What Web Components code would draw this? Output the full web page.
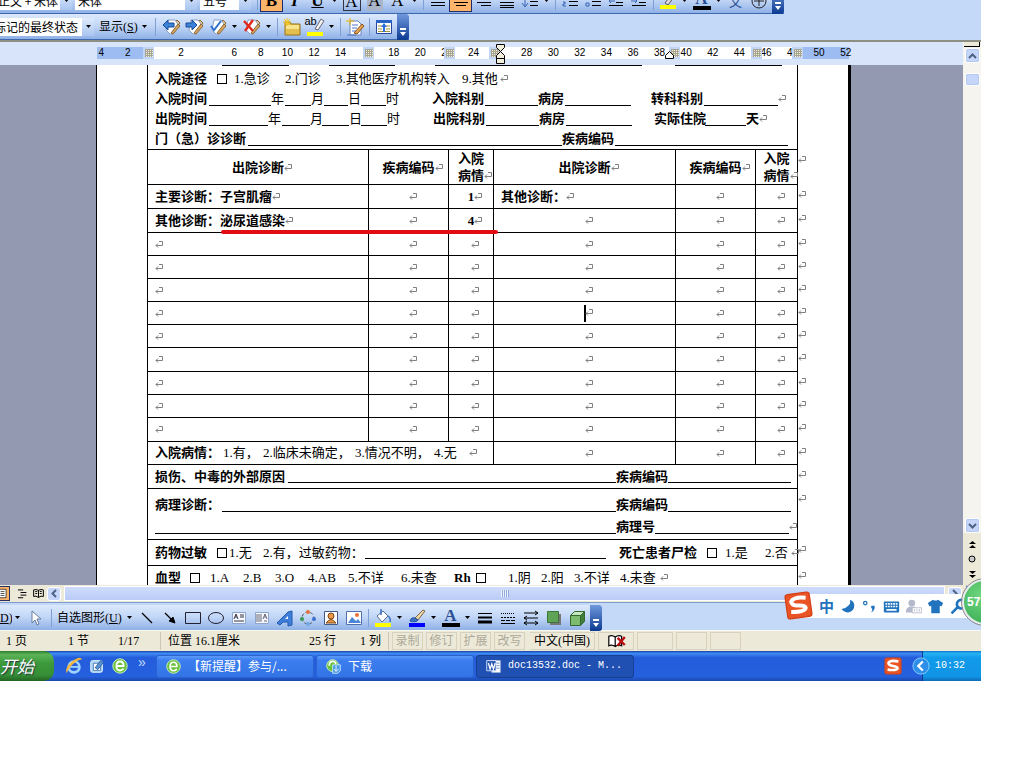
<!DOCTYPE html>
<html lang="zh-CN">
<head>
<meta charset="utf-8">
<title>doc13532.doc - Microsoft Word</title>
<style>
body{margin:0;background:#fff;font:12px/16px "Liberation Serif","Noto Sans CJK SC",serif;color:#000}
</style>
</head>
<body>
<xp-desktop></xp-desktop>
<script>
const define=(name,css,html)=>customElements.define(name,class extends HTMLElement{
  connectedCallback(){
    if(this.shadowRoot)return;
    const t=document.createElement('template');
    t.innerHTML='<style>*{box-sizing:border-box}'+css+'</style>'+(typeof html==='function'?html(this):html);
    this.attachShadow({mode:'open'}).append(t.content.cloneNode(true));
  }
});
const svg=(body,box='0 0 20 20')=>`<svg viewBox="${box}" fill="none" stroke="#000" stroke-width="1">${body}</svg>`;
const doc='<path d="M6 13 15 3l3 3-8 11z" fill="#e9c48a" stroke="#8a6a3c"/><path d="M6 3h7l3 4-5 10H8L4 13z" fill="#fff" stroke="#8aa0c8"/><path d="m9 16 7-9 2 2-7 8z" fill="#d9a45c" stroke="#8a6a3c"/>';
const lines=(a)=>a.map(([x,y,w])=>`<path d="M${x} ${y}.5h${w}"/>`).join('');
const ICONS={
  b:'<b>B</b>', i:'<i>I</i>', u:'<u>U</u>',
  abox:'<span class="box">A</span>', ashade:'<span class="shade">A</span>', a:'<span class="wide">A</span>',
  left:svg(lines([[3,5,14],[3,8,14],[3,11,14],[3,14,14]])), center:svg(lines([[3,5,14],[5,8,10],[3,11,14],[5,14,10]])),
  right:svg(lines([[3,5,14],[7,8,10],[3,11,14],[7,14,10]])), dist:svg(lines([[3,5,14],[3,8,14],[3,11,14],[3,14,14],[3,16,14]])),
  spacing:svg('<path d="M5 4v11M2 12l3 4 3-4" stroke="#3565b5"/>'+lines([[10,6,8],[10,10,8],[10,14,8]])),
  num:svg('<path d="M4 4v4M3 11h2v2H3v2h3" stroke="#3565b5"/>'+lines([[9,6,9],[9,10,9],[9,14,9]])),
  bul:svg('<path d="M3 5h3v3H3zM3 12h3v3H3z" stroke="#3565b5"/>'+lines([[9,6,9],[9,10,9],[9,14,9]])),
  out:svg(lines([[3,5,14],[10,8,7],[10,11,7],[3,14,14]])+'<path d="M3 10h6M5 8l-2 2 2 2" stroke="#3565b5"/>'),
  ind:svg(lines([[3,5,14],[10,8,7],[10,11,7],[3,14,14]])+'<path d="M2 10h6M6 8l2 2-2 2" stroke="#3565b5"/>'),
  high:svg('<path d="m7 12 6-8 3 2-6 8z" fill="#ddd" stroke="#555"/><path d="M2 14h16v4H2z" fill="#ff0" stroke="none"/>'),
  fcol:'<span class="fc">A</span>',
  wen:'<span class="wen">文</span>', circ:svg('<circle cx="10" cy="10" r="7" stroke="#222"/><path d="M5 10h10M10 5v10" stroke="#222"/>'),
  prev:svg(doc+'<path d="M1 8l5-5v3h6v4H6v3z" fill="#3b82d8" stroke="#174a9a"/>'),
  next:svg(doc+'<path d="M12 8 7 3v3H1v4h6v3z" fill="#3b82d8" stroke="#174a9a"/>'),
  accept:svg(doc+'<path d="m3 9 3 4 7-9" stroke="#2f72cf" stroke-width="2"/>'),
  reject:svg(doc+'<path d="m2 4 9 10M11 3 3 14" stroke="#e0281c" stroke-width="2.4"/>'),
  note:svg('<path d="M3 5h5l1 2h9v11H3z" fill="#e3c04e" stroke="#96731d"/><path d="M4 8h13v4H4z" fill="#f7e48e" stroke="none"/><path d="M5 1v8M1 5h8M2 2l6 6M8 2 2 8" stroke="#f0c419"/>'),
  abhi:'<span class="ab">ab</span>'+svg('<path d="m10 12 6-10 3 2-6 9z" fill="#eee" stroke="#667"/><path d="M2 15h16v4H2z" fill="#ff0" stroke="none"/>'),
  track:svg('<path d="M5 4h8l3 3v11H5z" fill="#fff" stroke="#6d86bd"/><path d="M7 8h6M7 11h5M7 14h4M2 18h9" stroke="#4a74c9"/><path d="m9 16 8-9 2 2-7 8z" fill="#e6a452" stroke="#85541d"/><path d="M5 1v7M1 4h8" stroke="#f0b400"/>'),
  pane:svg('<path d="M2.500 3.500h15v13h-15z" fill="#fff" stroke="#23479c"/><path d="M2 3h16v3H2z" fill="#2a62c8" stroke="none"/><path d="M4 9h4M12 9h4M4 12h4M12 12h4M4 14.500h12" stroke="#a39037"/><path d="m10 6 3 4h-2v5H9v-5H7z" fill="#2a70d8" stroke="none"/>'),
  cursor:svg('<path d="M7 3v12l3-3 2 5 2-1-2-5h4z" fill="#fff" stroke="#66799c"/>'),
  line:svg('<path d="m5 5 10 10" stroke-width="1.300"/>'),
  arrow:svg('<path d="m5 5 7 7" stroke-width="1.300"/><path d="m15 15-6-2 4-4z" fill="#000"/>'),
  rect:svg('<path d="M2.500 4.500h15v11h-15z" stroke="#223"/>'), oval:svg('<ellipse cx="10" cy="10" rx="7.500" ry="5.500" stroke="#223"/>'),
  tbox:svg('<path d="M3.500 4.500h13v11h-13z" fill="#f6f9ff" stroke="#8ea3cd"/><path d="m5 11 2-5 2 5M6 9h2M11 7h4M11 9h4M5 13h10" stroke="#334"/>'),
  vbox:svg('<path d="M3.500 4.500h13v11h-13z" fill="#f6f9ff" stroke="#8ea3cd"/><path d="m11 11 2-5 2 5M12 9h2M5 6v8M7 6v8M9 6v8M12 13h3" stroke="#667"/>'),
  wart:svg('<path d="m2 15 11-11 4-1v14l-4 1v-4H8l-3 3z" fill="#3f7fdc" stroke="#2458ad"/><path d="M10 11h3V8z" fill="#fff" stroke="none"/>'),
  diag:svg('<circle cx="10" cy="10" r="6" stroke="#555" stroke-dasharray="3 2"/><circle cx="10" cy="4" r="2" fill="#e8703a" stroke="none"/><circle cx="4" cy="11" r="2" fill="#3a9a52" stroke="none"/><circle cx="16" cy="11" r="2" fill="#3a6fd0" stroke="none"/><circle cx="10" cy="16" r="2" fill="#70a8e8" stroke="none"/>'),
  clip:svg('<path d="M3.500 3.500h13v13h-13z" fill="#fff" stroke="#445a86"/><circle cx="10" cy="8" r="3" fill="#e89a46" stroke="#7c4515"/><path d="M5 15q5-7 10 0z" fill="#e89a46" stroke="#7c4515"/>'),
  pic:svg('<path d="M2.500 3.500h15v13h-15z" fill="#fff" stroke="#4f70ad"/><circle cx="13" cy="7" r="2" fill="#e8703a" stroke="none"/><path d="m4 15 4-6 4 4 2-2 3 4z" fill="#4a86d8" stroke="none"/>'),
  fill:svg('<path d="m4 8 6-5 5 5-6 6z" fill="#fff" stroke="#556b96"/><path d="M8 1v6M15 8q3 2 2 6" stroke="#3a70c0" stroke-width="1.500"/><path d="M2 15h16v4H2z" fill="#ff0" stroke="none"/>'),
  brush:svg('<path d="m8 10 8-8 2 1-7 9z" fill="#efd6a8" stroke="#7d6642"/><path d="M3 13q1-4 5-3l3 2q-2 3-8 1z" fill="#3a72c8" stroke="#24509b"/><path d="M2 15h16v4H2z" fill="#00f" stroke="none"/>'),
  wts:svg('<path d="M3 5.500h14" /><path d="M3 9.500h14" stroke-width="2"/><path d="M3 14h14" stroke-width="3"/>'),
  dash:svg('<path d="M3 5.500h14" stroke-dasharray="1 1"/><path d="M3 9.500h14" stroke-dasharray="2 1"/><path d="M3 12.500h14" stroke-dasharray="4 1"/><path d="M3 15.500h14"/>'),
  arrs:svg('<path d="M3 5h14M3 10h14M3 15h14M14 3l3 2-3 2M6 8l-3 2 3 2M6 13l-3 2 3 2M14 13l3 2-3 2"/>'),
  shad:svg('<path d="M6 6h11v11H6z" fill="#777" stroke="none"/><path d="M3.500 3.500h11v11h-11z" fill="#5fa356" stroke="#3c7537"/>'),
  cube:svg('<path d="M3.500 7.500h10v10h-10z" fill="#7dbb70" stroke="#34682f"/><path d="m3.500 7.500 4-4h10l-4 4z" fill="#c5e5bd" stroke="#34682f"/><path d="m13.500 7.500 4-4v10l-4 4z" fill="#3f7f3a" stroke="#34682f"/>'),
  layout:svg('<path d="M4.500 3.500h11v13h-11z" fill="#fff"/><path d="M7 7h6M7 10h6M7 13h6"/>'),
  outline:svg('<path d="M3 4.500h8M7 8.500h9M7 12.500h9M3 16.500h8" stroke-width="1.500"/>'),
  book:svg('<path d="M10 5Q6 3 2.500 4.500v10Q6 13 10 16q4-3 7.500-1.500v-10Q14 3 10 5v11M5 7h3M5 10h3M12 7h3M12 10h3" stroke-width="1.500"/>'),
  spell:svg('<path d="M11 5Q7 2 3 4v12q4-2 8 1 4-3 8-1V4q-4-2-8 1v12" fill="#fff" stroke-width="1.500"/><path d="m14 6 9 9M23 5l-9 11" stroke="#b80f14" stroke-width="3"/>','0 0 24 20'),
  ie:svg('<circle cx="10" cy="11" r="6" stroke="#9ed4ff" stroke-width="3"/><path d="M5 11h10" stroke="#9ed4ff" stroke-width="2"/><path d="M2 18Q-1 12 8 5t11-2q-3-1-9 4T2 18z" fill="#f4b73c" stroke="none"/>'),
  desk:svg('<rect x="3" y="4" width="13" height="13" rx="2" fill="#a9d3f4" stroke="#e5f4ff"/><path d="M6 7h8v8H6z" fill="#fff" stroke="#4d7db5"/><path d="m8 12 6-8 3 2-6 8z" fill="#5b94d4" stroke="#265b9d"/>'),
  green:svg('<circle cx="10" cy="10" r="8" fill="#69c33d" stroke="#d4f3bd"/><path d="M14 13q-2 2-4 2-4 0-4-5t4-5q4 0 4 5H6" stroke="#fff" stroke-width="2"/>'),
  dl:svg('<circle cx="9" cy="9" r="7" fill="#69c33d" stroke="#d4f3bd"/><path d="M13 7q-1-3-4-3-4 0-4 5" stroke="#fff" stroke-width="2"/><path d="M9 8h9v7l-3 3H9z" fill="#4b9ce8" stroke="#cfe8ff"/><path d="M13 9v6m-2-2 2 3 3-3" stroke="#fff"/>'),
  word:svg('<path d="M8 3h10v14H8z" fill="#fff" stroke="#9fb6e0"/><path d="M13 6h4M13 9h4M13 12h4" stroke="#5c82c8"/><path d="M2 3h11v12H2z" fill="#2c59b4" stroke="#dce8ff"/><path d="m4 6 2 7 2-6 2 6 2-7" stroke="#fff" stroke-width="1.500"/>'),
  sogou:svg('<rect x="1" y="1" width="18" height="18" rx="2" fill="#ea5324" stroke="#d4431a"/><path d="M16 5Q7 3 5 6.500q0 3 5 3.500 5 .5 5 2.500-1 3-11 1.500" stroke="#fff" stroke-width="3"/>'),
  moon:svg('<path d="M13 2q2 8-10 11 3 4 8 4 7-2 7-8 0-5-5-7z" fill="#2273bd" stroke="none"/>'),
  punct:svg('<circle cx="5" cy="6" r="2" stroke="#2273bd" stroke-width="1.500"/><path d="M12 9h4q1 5-4 8 2-3 1-5h-1z" fill="#2273bd" stroke="none"/>'),
  kbd:svg('<rect x="1" y="4" width="18" height="13" rx="1" fill="#2273bd" stroke="none"/><path d="M3 7h14M3 10h14" stroke="#fff" stroke-width="2" stroke-dasharray="2 1"/><path d="M4 14h12" stroke="#fff" stroke-width="2"/>'),
  user:svg('<circle cx="8" cy="6" r="4" fill="#b4b9cc" stroke="none"/><path d="M1 17q0-7 7-7t7 7z" fill="#b4b9cc" stroke="none"/><path d="M8.500 11.500h11v6h-11z" fill="#fff" stroke="#b4b9cc"/><path d="M11 13v3M14 13v3M17 13v3" stroke="#b4b9cc"/>'),
  shirt:svg('<path d="m1 6 6-4q3 2 6 0l6 4-2 4-2-1v9H5V9l-2 1z" fill="#2273bd" stroke="none"/>'),
  wrench:svg('<path d="m3 18 8-8" stroke="#2273bd" stroke-width="3"/><path d="M17 3a5 5 0 1 0 2 6" stroke="#2273bd" stroke-width="3"/>'),
  tray:svg('<circle cx="10" cy="10" r="9" fill="#2e8fe8" stroke="#8fd0ff"/><path d="m12 5-5 5 5 5" stroke="#fff" stroke-width="2.500"/>')
};
define('ui-icon',':host{display:inline-block;width:20px;height:20px;position:relative;text-align:center;font:bold 17px/20px "Liberation Serif",serif}svg{display:block;width:100%;height:100%}.box{display:block;border:1px solid #334;font-weight:400;line-height:17px;margin:1px}.shade{display:block;background:#a9b5c9;font-weight:400;margin:0 2px}.wide{font-weight:400}.fc{display:block;border-bottom:4px solid #000;line-height:15px;color:#2b4f93;margin:0 1px}.wen{display:block;font:13px/20px "Noto Sans CJK SC",sans-serif;color:#2b4f93}.ab{position:absolute;left:0;top:-2px;font:11px/12px "Liberation Sans",sans-serif}',
  h=>ICONS[h.getAttribute('name')]);
const caret='<button class="more" aria-label="更多"><svg width="5" height="3" viewBox="0 0 5 3"><path d="M0 0h5L2.500 3z"/></svg></button>';
define('tool-button',':host{display:flex;flex:none;align-items:center;height:22px}button{border:0;background:none;padding:0;margin:0;font:inherit;color:inherit}.main{width:23px;height:22px;display:grid;place-items:center}.text{white-space:nowrap;overflow:hidden;text-align:left;font-size:12px;line-height:20px}.more{width:11px;height:22px;display:grid;place-items:center}:host([active]) .main{background:#fcb46a;border:1px solid #1c2c6c}',
  h=>(h.hasAttribute('icon')?`<button class="main" aria-label="${h.getAttribute('label')}"><ui-icon name="${h.getAttribute('icon')}"></ui-icon></button>`:`<button class="text" style="width:${h.getAttribute('size')}px"><slot></slot></button>`)+(h.hasAttribute('menu')?caret:''));
define('drop-box',':host{display:flex;flex:none;height:18px;background:#fff;overflow:hidden}select{appearance:none;border:0;background:none;padding:0;margin:0 0 0 var(--start,3px);flex:1;min-width:0;font:12px/18px "Noto Sans CJK SC",sans-serif;color:#000}span{width:12px;background:linear-gradient(#dfeafc,#a9c5f0);display:grid;place-items:center}',
  h=>`<select aria-label="${h.getAttribute('label')}"><option>${h.getAttribute('value')}</option></select><span><svg width="5" height="3" viewBox="0 0 5 3"><path d="M0 0h5L2.500 3z"/></svg></span>`);
define('tool-sep',':host{flex:none;width:6px;height:18px;display:flex;justify-content:center}i{width:1px;background:#7d9fd6}','<i></i>');
define('tool-bar',':host{display:flex;flex:none;width:max-content;height:26px;align-items:center;background:linear-gradient(#dce9fc,#c0d5f6 50%,#8fb1e6);border-bottom:1px solid #3f67b0}.end{width:12px;height:26px;margin-left:2px;background:linear-gradient(#6f98dc,#0b3a92);border-radius:0 3px 3px 0;display:grid;align-items:end;justify-items:center;border:0;padding:0 0 4px}',
  '<slot></slot><button class="end" aria-label="工具栏选项"><svg width="6" height="8" viewBox="0 0 6 8" fill="#fff"><path d="M0 0h6v2H0zM0 4h6L3 8z"/></svg></button>');
const T=(icon,label,menu,active)=>`<tool-button icon="${icon}" label="${label}"${menu?' menu':''}${active?' active':''}></tool-button>`;
const S='<tool-sep></tool-sep>';

define('para-mark',':host{display:inline-block;width:8px;height:8px;margin-right:-8px}svg{display:block}','<svg width="8" height="8" viewBox="0 0 8 8" fill="none" stroke="#808080"><path d="M4 .5h3.500v4H1M3 2.500 1 4.500l2 2"/></svg>');
define('form-line',':host{display:grid;height:20px;line-height:20px;white-space:nowrap;align-items:center}::slotted(s){text-decoration:none;border-bottom:1px solid #000;height:13px}::slotted(input){appearance:none;width:10px;height:10px;margin:0;border:1px solid #000;background:#fff}::slotted(b){font-weight:700}',
  h=>{h.style.gridTemplateColumns=h.getAttribute('cols').split(' ').map(v=>v+'px').join(' ');return '<slot></slot>'});
define('page-ruler',`:host{display:block;position:relative;height:23px}
.band{position:absolute;inset:5px 2px 6px 1px;background:#fff;border-left:56px solid #9dbcf1;border-right:54px solid #9dbcf1}
.nums{position:relative;display:grid;grid-template-columns:repeat(29,1fr);margin:0 -8px;text-align:center;font:10px/22px "Liberation Sans",sans-serif}
.mk{position:absolute;top:5px;width:11px;height:12px;background:#c1d5f6;display:grid;place-items:center}.mk i{width:8px;height:8px;background:repeating-linear-gradient(90deg,#a5a392 0 1px,#fff0 1px 2px),repeating-linear-gradient(#a5a392 0 1px,#f4f0d8 1px 2px)}
svg{position:absolute}`,
  ()=>'<div class="band"></div><div class="nums">'+[4,2,'',2,'',6,8,10,12,14,'',18,20,22,24,'',28,30,32,34,36,38,40,42,44,46,48,50,52].map(n=>`<span>${n}</span>`).join('')+'</div>'+[47,267,348,393,573,655,696].map(x=>`<span class="mk" style="left:${x}px"><i></i></span>`).join('')+
  '<svg style="left:399px;top:2px" width="11" height="21" viewBox="0 0 11 21" fill="#f1eedd" stroke="#000"><path d="M1.500.5h8v3l-4 4-4-4zM5.500 7.500l4 4v3h-8v-3zM1.500 14.500h8v5h-8z"/></svg><svg style="left:569px;top:9px" width="9" height="8" viewBox="0 0 9 8" fill="#fff" stroke="#000"><path d="M4.500.5l4 4v3h-8v-3z"/></svg>');
const P='<para-mark></para-mark>';
const blankRow=(tall,cursor)=>`<tr class="${tall?'t24':'t23'}"><td>${P}</td><td class="c">${P}</td><td class="c">${P}</td><td class="c">${cursor?'<em></em>':''}${P}</td><td class="c">${P}</td><td class="c">${P}</td><td class="end">${P}</td></tr>`;
define('word-page',`:host{display:block;position:relative;background:#fff;border-left:1px solid #000;border-right:3px solid #000;font-size:13px;padding-left:50px}
table{border-collapse:collapse;table-layout:fixed;width:666px;margin-top:-1px}
td,th{border:1px solid #000;padding:0 0 0 7px;font-size:13px;line-height:17px;white-space:nowrap;text-align:left;font-weight:400}
th,.c{text-align:center;padding:0;font-weight:700}th{font-weight:700}
.end{border:0;vertical-align:top;padding:4px 0 0;line-height:12px}
.t23{height:23px}.t24{height:24px}.head{height:35px}.path{height:51px}.drug{height:26px}.blood{height:40px}.path td,.blood td{vertical-align:top}
.path form-line+form-line{margin-top:2px}.path td{padding-top:6px}.blood td{padding-top:2px}.blood .end,.path .end{padding-top:4px}
.info{height:85px}.info td{vertical-align:top}.top{display:grid;grid-template-columns:67px 67px 40px 66px 40px 207px 33px 107px;height:4px;align-items:start}.top s{height:1px;background:#000}
em{display:inline-block;width:2px;height:17px;margin:0 -1px;background:#000;vertical-align:middle}
.red{position:absolute;left:124px;top:165px;width:277px;height:4px;border-radius:2px;background:#e00d12}`,
`<table><colgroup><col style="width:221px"><col style="width:80px"><col style="width:45px"><col style="width:182px"><col style="width:80px"><col style="width:42px"><col style="width:16px"></colgroup>
<tr class="info"><td colspan="6"><div class="top"><i></i><s></s><i></i><s></s><i></i><s></s><i></i><s></s></div>
<form-line cols="62 17 51 51 126 38 10"><b>入院途径</b><input type="checkbox" aria-label="入院途径"><span>1.急诊</span><span>2.门诊</span><span>3.其他医疗机构转入</span><span>9.其他</span>${P}</form-line>
<form-line cols="54 62 14 26 13 24 13 25 46 53 53 27 66 20 53 74 10"><b>入院时间</b><s></s><span>年</span><s></s><span>月</span><s></s><span>日</span><s></s><span>时</span><b>入院科别</b><s></s><b>病房</b><s></s><i></i><b>转科科别</b><s></s>${P}</form-line>
<form-line cols="54 59 14 28 12 27 12 26 46 53 53 27 66 22 51 41 13 10"><b>出院时间</b><s></s><span>年</span><s></s><span>月</span><s></s><span>日</span><s></s><span>时</span><b>出院科别</b><s></s><b>病房</b><s></s><i></i><b>实际住院</b><s></s><b>天</b>${P}</form-line>
<form-line cols="93 314 53 173"><b>门（急）诊诊断</b><s></s><b>疾病编码</b><s></s></form-line></td><td class="end"></td></tr>
<tr class="head"><th>出院诊断${P}</th><th>疾病编码${P}</th><th>入院<br>病情${P}</th><th>出院诊断${P}</th><th>疾病编码${P}</th><th>入院<br>病情${P}</th><td class="end">${P}</td></tr>
<tr class="t24"><td><b>主要诊断：子宫肌瘤</b>${P}</td><td class="c">${P}</td><td class="c">1${P}</td><td><b>其他诊断：</b>${P}</td><td class="c">${P}</td><td class="c">${P}</td><td class="end">${P}</td></tr>
<tr class="t24"><td><b>其他诊断：泌尿道感染</b>${P}</td><td class="c">${P}</td><td class="c">4${P}</td><td class="c">${P}</td><td class="c">${P}</td><td class="c">${P}</td><td class="end">${P}</td></tr>
${[0,0,0,0,0,1,0,0,1].map((t,i)=>blankRow(t,i===3)).join('')}
<tr class="t23"><td colspan="3"><form-line cols="68 40 92 79 35 8"><b>入院病情：</b><span>1.有，</span><span>2.临床未确定，</span><span>3.情况不明，</span><span>4.无</span>${P}</form-line></td><td class="c">${P}</td><td class="c">${P}</td><td class="c">${P}</td><td class="end">${P}</td></tr>
<tr class="t24"><td colspan="6"><form-line cols="133 328 52 123"><b>损伤、中毒的外部原因</b><s></s><b>疾病编码</b><s></s></form-line></td><td class="end">${P}</td></tr>
<tr class="path"><td colspan="6"><form-line cols="67 394 52 123"><b>病理诊断：</b><s></s><b>疾病编码</b><s></s></form-line><form-line cols="461 39 134 8"><s></s><b>病理号</b><s></s>${P}</form-line></td><td class="end">${P}</td></tr>
<tr class="drug"><td colspan="6"><form-line cols="62 12 34 102 241 13 88 18 40 26 8"><b>药物过敏</b><input type="checkbox" aria-label="药物过敏"><span>1.无</span><span>2.有，过敏药物：</span><s></s><i></i><b>死亡患者尸检</b><input type="checkbox" aria-label="死亡患者尸检"><span>1.是</span><span>2.否</span>${P}</form-line></td><td class="end">${P}</td></tr>
<tr class="blood"><td colspan="6"><form-line cols="35 20 33 32 33 40 53 53 22 32 33 33 46 40 8"><b>血型</b><input type="checkbox" aria-label="血型"><span>1.A</span><span>2.B</span><span>3.O</span><span>4.AB</span><span>5.不详</span><span>6.未查</span><b>Rh</b><input type="checkbox" aria-label="Rh"><span>1.阴</span><span>2.阳</span><span>3.不详</span><span>4.未查</span>${P}</form-line></td><td class="end">${P}</td></tr>
</table><div class="red"></div>`);
define('scroll-column',`:host{display:flex;flex-direction:column;align-items:center;width:18px;background:#f5f4ef}
.split{width:16px;height:5px;background:#ece9d8;border:solid #000;border-width:0 1px 1px 0;margin-bottom:1px}
button{width:15px;height:15px;padding:0;border:1px solid #fff;outline:1px solid #b5c8f0;outline-offset:-2px;border-radius:3px;background:#c6d6fb;display:grid;place-items:center}
.thumb{height:13px;margin-top:10px}.grow{flex:1}.nav{width:18px;height:52px;background:#ece9d8;display:flex;flex-direction:column;align-items:center;justify-content:space-evenly}`,
`<div class="split"></div><button aria-label="向上"><svg width="9" height="6" fill="none" stroke="#4d6185" stroke-width="2"><path d="m1 5 3.500-3.500L8 5"/></svg></button><button class="thumb" aria-label="滚动"></button><div class="grow"></div><button aria-label="向下"><svg width="9" height="6" fill="none" stroke="#4d6185" stroke-width="2"><path d="m1 1 3.500 3.500L8 1"/></svg></button>
<div class="nav"><svg width="7" height="7"><path d="M0 3 3.500 0 7 3zM0 7l3.500-3L7 7z"/></svg><svg width="8" height="8"><circle cx="4" cy="4" r="3" fill="#ccc" stroke="#000"/></svg><svg width="7" height="7"><path d="M0 0h7L3.500 3zM0 4h7L3.500 7z"/></svg></div>`);
define('status-bar',`:host{display:flex;height:21px;padding:1px 0;background:#ece9d8;border-top:1px solid #f8f7f0;line-height:18px;white-space:nowrap;overflow:hidden}
div{display:grid;padding-left:6px;border-right:1px solid #cbc7b4}.a{grid-template-columns:62px 50px 42px}.b{grid-template-columns:141px 51px 28px;margin-left:1px}
span.m{width:31px;margin-left:3px;border:1px solid #d6d2bf;color:#aca899;text-align:center;line-height:16px}.m.k{width:65px;color:#000;margin-left:5px;border-left:0}.m.s{width:36px}ui-icon{width:22px;height:16px}`,
`<div class="a"><span>1 页</span><span>1 节</span><span>1/17</span></div><div class="b"><span>位置 16.1厘米</span><span>25 行</span><span>1 列</span></div>
<span class="m">录制</span><span class="m">修订</span><span class="m">扩展</span><span class="m">改写</span><span class="m k">中文(中国)</span><span class="m s"><ui-icon name="spell"></ui-icon></span><span class="m s"></span><span class="m"></span><span class="m"></span>`);
define('task-button',':host{display:block;width:158px;flex:none}button{width:100%;height:23px;border:1px solid #2a62cf;border-radius:3px;background:linear-gradient(#5c9bfa,#3c7ef0 20%,#3274e6);color:#fff;display:flex;align-items:center;gap:6px;padding:0 8px;font:12px/20px "Noto Sans CJK SC",sans-serif;white-space:nowrap}:host([mono]) button{font:10px/20px "Liberation Mono",monospace;background:#1f50b2;border-color:#173f92}ui-icon{width:17px;height:17px}',
  h=>`<button><ui-icon name="${h.getAttribute('icon')}"></ui-icon><slot></slot></button>`);
define('task-bar',`:host{display:flex;align-items:center;height:30px;background:linear-gradient(#1941a5,#3f8bf4 8%,#245ddb 22%,#2560de 85%,#1b48ae);color:#fff}
.start{width:54px;height:30px;border:0;padding:0;background:linear-gradient(#2f7d2e,#5cb457 12%,#3c9a3b 40%,#368f36 80%,#236323);border-radius:0 10px 10px 0;color:#fff;font:italic 17px/26px "Noto Sans CJK SC",sans-serif;text-align:left;text-shadow:1px 1px 1px #234;overflow:hidden;white-space:nowrap}
.quick{display:flex;gap:5px;width:102px;padding-left:11px;align-items:center}.quick ui-icon{width:18px;height:18px}.quick span{font:14px/20px "Liberation Sans",sans-serif;margin:-8px 0 0 4px;color:#c7dcff}
.tasks{display:flex;gap:2px;flex:1;min-width:0}.sg{width:18px;height:18px;margin-right:20px}
.tray{width:59px;height:30px;display:flex;align-items:center;gap:5px;background:linear-gradient(#0f77c9,#27b3f5 8%,#119bea 22%,#1194e6 85%,#0c6cb5);border-left:1px solid #0a3d8f;font:10px/16px "Liberation Mono",monospace}.tray ui-icon{width:18px;height:18px;margin-left:-11px}`,
`<button class="start">开始</button><div class="quick"><ui-icon name="ie"></ui-icon><ui-icon name="desk"></ui-icon><ui-icon name="green"></ui-icon><span>»</span></div>
<div class="tasks"><task-button icon="green">【新提醒】参与/...</task-button><task-button icon="dl">下载</task-button><task-button icon="word" mono>doc13532.doc - M...</task-button></div><ui-icon class="sg" name="sogou"></ui-icon><div class="tray"><ui-icon name="tray"></ui-icon><span>10:32</span></div>`);
define('ime-bar',`:host{display:flex;align-items:center;gap:5px;height:24px;width:180px;padding-left:22px;background:#fff;color:#2273bd}
.logo{position:absolute;left:-12px;top:-2px;width:27px;height:27px;transform:rotate(-8deg)}b{font:bold 15px/20px "Noto Sans CJK SC",sans-serif}ui-icon{width:17px;height:17px;flex:none}`,
`<ui-icon class="logo" name="sogou"></ui-icon><b>中</b><ui-icon name="moon"></ui-icon><ui-icon name="punct"></ui-icon><ui-icon name="kbd"></ui-icon><ui-icon name="user"></ui-icon><ui-icon name="shirt"></ui-icon><ui-icon name="wrench"></ui-icon>`);
define('xp-desktop',`:host{display:block;position:relative;margin-right:43px;overflow:hidden;background:#c4d9f7;font-family:"Liberation Serif","Noto Sans CJK SC",serif}
.fmt{height:14px;display:flex;align-items:flex-end;overflow:hidden}.fmt drop-box{margin-right:3px}
.rev{height:28px;border-bottom:2px solid #8d8f83}.rev tool-button[size]{margin-left:5px}.rev .gap{width:10px}
.w1{width:72px;--start:-2px}.w2{width:122px}.w3{width:51px}.w4{width:94px;--start:-6px}
.view{display:grid;grid-template-columns:1fr 18px;background:#d8e4f9}
.ruler,.space{display:grid;grid-template-columns:96fr 755px 112fr}.ruler{grid-column:1;grid-row:1}.ruler page-ruler,.space word-page{grid-column:2}
.space{grid-column:1;height:520px;overflow:hidden;background:#9299b0}scroll-column{grid-column:2;grid-row:1/3}
.hs{display:flex;align-items:center;height:17px;background:#ece9d8}.hs ui-icon{width:13px;height:13px;margin:0 1px 0 2px}.hs .on{outline:1px solid #24305f;background:#fcb46a;margin:0 5px 0 -4px}
.hs button{width:14px;height:14px;padding:0;border:1px solid #fff;border-radius:3px;background:#c6d6fb;display:grid;place-items:center;margin:0 1px}.track{flex:1;height:15px;margin:0 2px;border:1px solid #fff;background:linear-gradient(#cfdcfc,#b9cbf7);display:grid;place-items:center}.track i{width:8px;height:7px;background:repeating-linear-gradient(90deg,#eef4fe 0 1px,#8fa9dd 1px 2px)}
.draw{padding:2px 0 1px;border-top:1px solid #7f9dcc;height:28px}.draw .gap{width:11px}
ime-bar{position:absolute;left:calc(100% - 184px);top:594px}
.ball{position:absolute;right:-27px;top:579px;width:46px;height:46px;border-radius:50%;background:radial-gradient(circle at 40% 35%,#6fd67e,#2fa64d);border:2px solid #e9ecef;outline:1px solid #888;color:#fff;font:bold 12px/42px "Liberation Sans",sans-serif;padding-left:3px}`,
`<div class="fmt"><tool-bar><drop-box class="w1" label="样式" value="正文 + 宋体"></drop-box><drop-box class="w2" label="字体" value="宋体"></drop-box><drop-box class="w3" label="字号" value="五号"></drop-box><tool-sep></tool-sep>${T('b','加粗',0,1)+T('i','倾斜')+T('u','下划线',1)+T('abox','字符边框')+T('ashade','字符底纹')+T('a','字符缩放',1)+S+T('left','两端对齐')+T('center','居中',0,1)+T('right','右对齐')+T('dist','分散对齐')+T('spacing','行距',1)+S+T('num','编号')+T('bul','项目符号')+T('out','减少缩进量')+T('ind','增加缩进量')+S+T('high','突出显示',1)+T('fcol','字体颜色',1)+T('wen','拼音指南')+T('circ','带圈字符')}</tool-bar></div>
<div class="rev"><tool-bar><drop-box class="w4" label="显示以审阅" value="标记的最终状态"></drop-box><tool-button size="40" menu>显示(<u>S</u>)</tool-button><tool-sep class="gap"></tool-sep>${T('prev','前一处修订')+T('next','后一处修订')+T('accept','接受修订',1)+T('reject','拒绝修订',1)+S+T('note','插入批注')+T('abhi','突出显示',1)+S+T('track','修订')+S+T('pane','审阅窗格')}</tool-bar></div>
<div class="view"><div class="ruler"><page-ruler></page-ruler></div><div class="space"><word-page></word-page></div><scroll-column></scroll-column></div>
<div class="hs"><ui-icon class="on" name="layout"></ui-icon><ui-icon name="outline"></ui-icon><ui-icon name="book"></ui-icon><button aria-label="向左"><svg width="6" height="9" fill="none" stroke="#4d6185" stroke-width="2"><path d="M5 1 1.500 4.500 5 8"/></svg></button><div class="track"><i></i></div><button aria-label="向右"><svg width="6" height="9" fill="none" stroke="#4d6185" stroke-width="2"><path d="m1 1 3.500 3.500L1 8"/></svg></button><tool-sep></tool-sep><tool-sep></tool-sep><tool-sep></tool-sep></div>
<div class="draw"><tool-bar><tool-button size="12" menu><u>D</u>)</tool-button>${T('cursor','选择对象')}<tool-sep class="gap"></tool-sep><tool-button size="67" menu>自选图形(<u>U</u>)</tool-button>${T('line','直线')+T('arrow','箭头')+T('rect','矩形')+T('oval','椭圆')+T('tbox','文本框')+T('vbox','竖排文本框')+T('wart','艺术字')+T('diag','组织结构图')+T('clip','剪贴画')+T('pic','图片')+S+T('fill','填充颜色',1)+T('brush','线条颜色',1)+T('fcol','字体颜色',1)+T('wts','线型')+T('dash','虚线线型')+T('arrs','箭头样式')+T('shad','阴影样式')+T('cube','三维效果样式')}</tool-bar></div>
<status-bar></status-bar><task-bar></task-bar><ime-bar></ime-bar><div class="ball">57</div>`);
</script>
</body>
</html>
